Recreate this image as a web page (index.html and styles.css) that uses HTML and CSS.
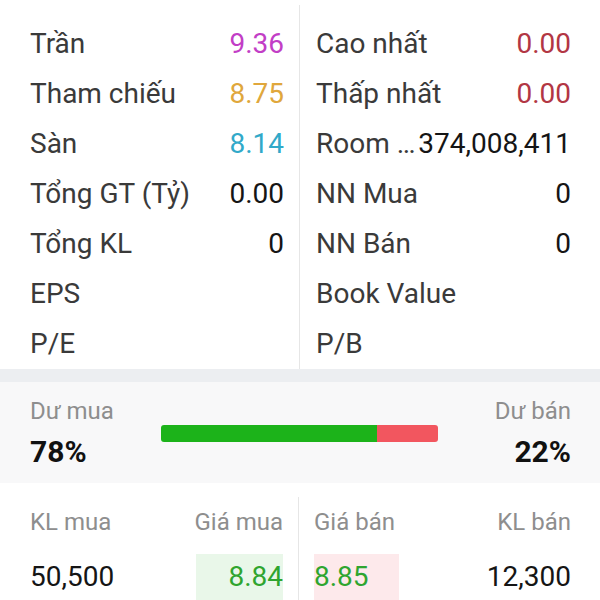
FILE: index.html
```html
<!DOCTYPE html>
<html lang="vi">
<head>
<meta charset="utf-8">
<title>Thông tin cổ phiếu</title>
<link rel="stylesheet" href="styles.css">
</head>
<body>
<div class="stats">
  <div class="col col-left">
    <div class="row"><span class="label">Trần</span><span class="val ceil">9.36</span></div>
    <div class="row"><span class="label">Tham chiếu</span><span class="val ref">8.75</span></div>
    <div class="row"><span class="label">Sàn</span><span class="val floor">8.14</span></div>
    <div class="row"><span class="label">Tổng GT (Tỷ)</span><span class="val">0.00</span></div>
    <div class="row"><span class="label">Tổng KL</span><span class="val">0</span></div>
    <div class="row"><span class="label">EPS</span><span class="val"></span></div>
    <div class="row"><span class="label">P/E</span><span class="val"></span></div>
  </div>
  <div class="col col-right">
    <div class="row"><span class="label">Cao nhất</span><span class="val down">0.00</span></div>
    <div class="row"><span class="label">Thấp nhất</span><span class="val down">0.00</span></div>
    <div class="row"><span class="label">Room …</span><span class="val">374,008,411</span></div>
    <div class="row"><span class="label">NN Mua</span><span class="val">0</span></div>
    <div class="row"><span class="label">NN Bán</span><span class="val">0</span></div>
    <div class="row"><span class="label">Book Value</span><span class="val"></span></div>
    <div class="row"><span class="label">P/B</span><span class="val"></span></div>
  </div>
</div>
<div class="band"></div>
<div class="surplus">
  <div class="side">
    <div class="s-label">Dư mua</div>
    <div class="s-pct">78%</div>
  </div>
  <div class="bar">
    <div class="bar-buy" style="width:78%"></div>
    <div class="bar-sell"></div>
  </div>
  <div class="side side-right">
    <div class="s-label">Dư bán</div>
    <div class="s-pct">22%</div>
  </div>
</div>
<div class="book">
  <div class="bcol bcol-left">
    <div class="bhead"><span>KL mua</span><span>Giá mua</span></div>
    <div class="brow"><span class="qty">50,500</span><span class="price price-buy">8.84</span></div>
  </div>
  <div class="bcol bcol-right">
    <div class="bhead"><span>Giá bán</span><span>KL bán</span></div>
    <div class="brow"><span class="price price-sell">8.85</span><span class="qty">12,300</span></div>
  </div>
</div>
</body>
</html>
```
FILE: styles.css
```css
* { box-sizing: border-box; }
html, body {
  margin: 0;
  padding: 0;
  background: #ffffff;
  font-family: Roboto, "Noto Sans", "Liberation Sans", sans-serif;
  overflow: hidden;
}
.stats {
  display: grid;
  grid-template-columns: 300px 300px;
  margin-top: 5px;
}
.col {
  padding-top: 14px;
}
.col-left {
  padding-left: 30px;
  padding-right: 15px;
  border-right: 1px solid #e6e6e6;
}
.col-right {
  padding-left: 16px;
  padding-right: 29px;
}
.row {
  display: flex;
  justify-content: space-between;
  align-items: center;
  height: 50px;
  font-size: 28px;
  line-height: 50px;
  white-space: nowrap;
}
.label { color: #3a3a3a; }
.val { color: #151515; }
.ceil { color: #c23ec6; }
.ref { color: #e0a73c; }
.floor { color: #31a9c9; }
.down { color: #b23644; }

.band {
  height: 13px;
  background: #eceef1;
}
.surplus {
  display: grid;
  grid-template-columns: 131px 1fr 133px;
  align-items: center;
  padding: 15px 29px 14px 30px;
  background: #f8f8f9;
}
.side { display: flex; flex-direction: column; gap: 10px; }
.side-right { align-items: flex-end; }
.s-label {
  font-size: 24px;
  line-height: 28px;
  color: #8e8e8e;
}
.s-pct {
  font-size: 30px;
  line-height: 34px;
  font-weight: 700;
  color: #111;
}
.bar {
  display: flex;
  height: 17px;
  border-radius: 3px;
  overflow: hidden;
}
.bar-buy { background: #1cb31a; }
.bar-sell { flex: 1; background: #f2565f; }

.book {
  display: grid;
  grid-template-columns: 299px 301px;
  margin-top: 14px;
}
.bcol-left {
  padding-left: 30px;
  padding-right: 15px;
  border-right: 1px solid #e6e6e6;
}
.bcol-right {
  padding-left: 15px;
  padding-right: 29px;
}
.bhead {
  display: flex;
  justify-content: space-between;
  height: 50px;
  line-height: 50px;
  font-size: 24px;
  color: #8e8e8e;
}
.brow {
  display: flex;
  justify-content: space-between;
  align-items: center;
  margin-top: 7px;
  height: 46px;
  font-size: 28px;
  line-height: 46px;
}
.qty { color: #151515; }
.price {
  width: 87px;
  color: #2fa52f;
}
.price-buy {
  text-align: right;
  background: #e9f7e9;
}
.price-sell {
  width: 85px;
  text-align: left;
  background: #fde9eb;
}
```
